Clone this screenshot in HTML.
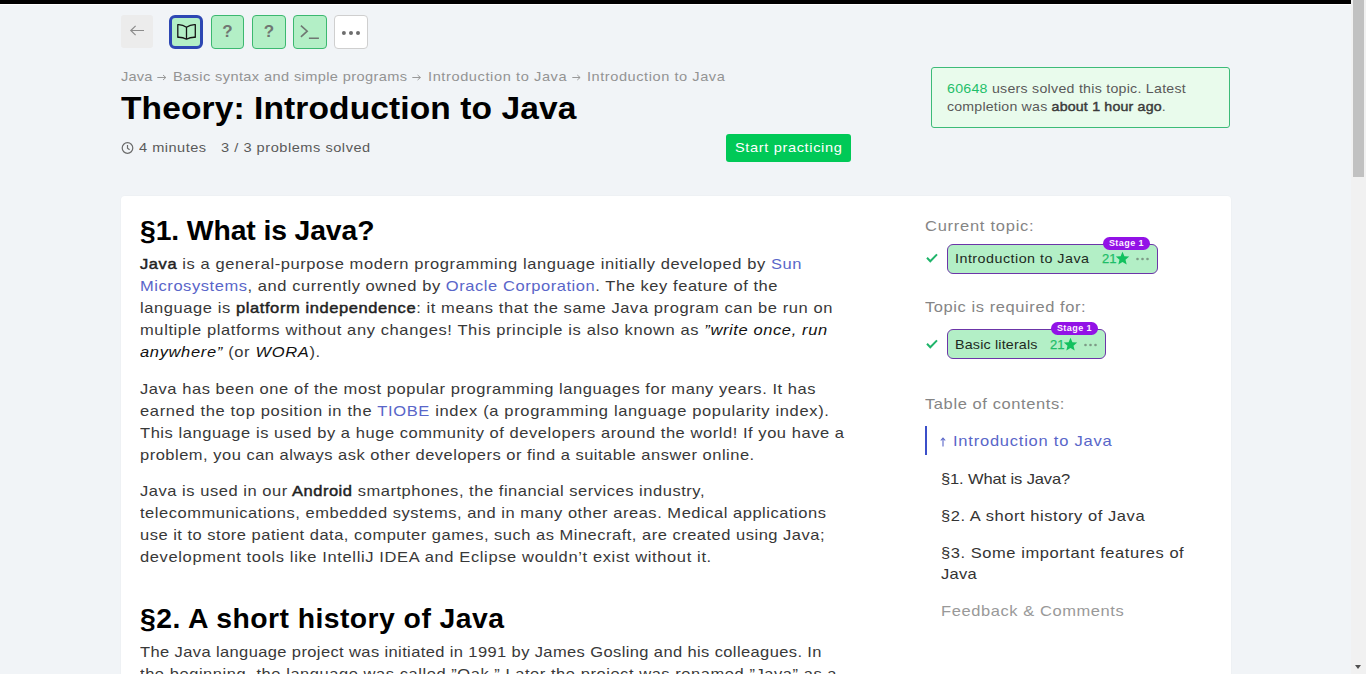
<!DOCTYPE html>
<html><head><meta charset="utf-8"><title>Theory: Introduction to Java</title>
<style>
html,body{margin:0;padding:0;}
body{width:1366px;height:674px;overflow:hidden;background:#f1f4f7;position:relative;font-family:"Liberation Sans",sans-serif;}
.ln{position:absolute;white-space:nowrap;transform-origin:0 0;}
.bt{color:#383838;}
.bt b{color:#222;font-weight:normal;-webkit-text-stroke:0.45px #222;}
.bt i{color:#111;}
.lk{color:#5966c9;}
.crumb{color:#939393;}
.title{color:#000;font-weight:bold;}
.meta{color:#5a5a5a;}
.info{color:#595959;}
.gn{color:#1fbf6a;}
.dk{color:#3a3a3a;font-weight:normal;-webkit-text-stroke:0.45px #3a3a3a;}
.startt{color:#fff;}
.h2{color:#000;font-weight:bold;}
.side{color:#858585;}
.tocl{color:#5966c9;}
.toci{color:#333;}
.tocf{color:#999;}
.pill{color:#1d2a22;}
.abs{position:absolute;box-sizing:border-box;}
.btn{background:#b3efc6;border:1px solid #3cb870;border-radius:4px;}
.q{position:absolute;left:0;top:0;width:100%;text-align:center;font-weight:bold;font-size:17px;line-height:32px;color:#6f7772;}
.pillb{background:#b3efc6;border:1.5px solid #6c35a8;border-radius:6px;}
.badge{background:#9212e6;color:#fdf0ff;border-radius:7px;font-size:9px;font-weight:bold;line-height:13.5px;text-align:center;letter-spacing:0.45px;}
.stars{color:#1fbd68;font-size:13px;line-height:18px;-webkit-text-stroke:0.25px #1fbd68;}

</style></head><body>
<div class="abs" style="left:0;top:0;width:1351px;height:4px;background:#000"></div>
<div class="abs" style="left:0;top:4px;width:1351px;height:1px;background:#fff"></div>
<div class="abs" style="left:1351px;top:0;width:15px;height:674px;background:#f1f1f1"></div>
<div class="abs" style="left:1353px;top:0;width:11px;height:177px;background:#c1c1c1"></div>
<div class="abs" style="left:1355px;top:665px;width:0;height:0;border-left:3.5px solid transparent;border-right:3.5px solid transparent;border-top:4px solid #505050"></div>
<!-- nav buttons -->
<div class="abs" style="left:121px;top:15px;width:32px;height:33px;background:#ececec;border-radius:3px">
  <svg width="32" height="33" style="position:absolute;left:0;top:0"><path d="M9.8 15.5 H23 M14.6 10.9 L9.8 15.5 L14.6 20.1" fill="none" stroke="#8c8c8c" stroke-width="1.2"/></svg>
</div>
<div class="abs" style="left:169px;top:15px;width:34px;height:34px;background:#b3efc6;border:3px solid #2d47b3;border-radius:6px">
  <svg width="28" height="28" style="position:absolute;left:0;top:0"><path d="M5.8 6.6 Q10.5 6.3 14.5 9.2 Q18.5 6.3 23.3 6.6 V19.3 Q18.5 19 14.5 21.2 Q10.5 19 5.8 19.3 Z M14.5 9.2 V21.2" fill="none" stroke="#151515" stroke-width="1.3" stroke-linejoin="round"/></svg>
</div>
<div class="abs btn" style="left:211px;top:15px;width:33px;height:34px"><span class="q">?</span></div>
<div class="abs btn" style="left:252px;top:15px;width:34px;height:34px"><span class="q">?</span></div>
<div class="abs btn" style="left:293px;top:15px;width:34px;height:34px">
  <svg width="32" height="32" style="position:absolute;left:0;top:0"><path d="M6.9 9.6 L13.2 15.2 L6.9 20.8 M14.9 22.2 H24.9" fill="none" stroke="#6f7772" stroke-width="1.6"/></svg>
</div>
<div class="abs" style="left:334px;top:15px;width:34px;height:34px;background:#fff;border:1px solid #cfcfcf;border-radius:4px">
  <svg width="32" height="32" style="position:absolute;left:0;top:0"><circle cx="8.9" cy="17" r="2" fill="#6d6d6d"/><circle cx="16" cy="17" r="2" fill="#6d6d6d"/><circle cx="23" cy="17" r="2" fill="#6d6d6d"/></svg>
</div>
<!-- crumb arrows -->
<svg class="abs" style="left:156.7px;top:71.6px" width="10.4" height="10"><path d="M0.3 5.5 H8.8 M6.0 3 L8.8 5.5 L6.0 8" fill="none" stroke="#999" stroke-width="1"/></svg>
<svg class="abs" style="left:411.5px;top:71.6px" width="10.0" height="10"><path d="M0.3 5.5 H8.4 M5.6 3 L8.4 5.5 L5.6 8" fill="none" stroke="#999" stroke-width="1"/></svg>
<svg class="abs" style="left:571.7px;top:71.6px" width="9.7" height="10"><path d="M0.3 5.5 H8.1 M5.3 3 L8.1 5.5 L5.3 8" fill="none" stroke="#999" stroke-width="1"/></svg>
<!-- clock -->
<svg class="abs" style="left:121px;top:140.5px" width="14" height="14"><circle cx="6.5" cy="7" r="5.3" fill="none" stroke="#6a6a6a" stroke-width="1.2"/><path d="M6.5 4 V7.2 L8.6 8.8" fill="none" stroke="#6a6a6a" stroke-width="1.2"/></svg>
<!-- info box -->
<div class="abs" style="left:931px;top:67px;width:299px;height:61px;background:#e9fbec;border:1px solid #3dbb78;border-radius:3px"></div>
<!-- start button -->
<div class="abs" style="left:726px;top:134px;width:125px;height:28px;background:#00c957;border-radius:3px"></div>
<!-- card -->
<div class="abs" style="left:121px;top:196px;width:1110px;height:500px;background:#fff;border-radius:4px;box-shadow:0 0 0 1px rgba(0,20,40,0.012)"></div>
<!-- sidebar pills -->
<svg class="abs" style="left:925px;top:251px" width="14" height="14"><path d="M2 6.8 L5.3 10.2 L12 3.4" fill="none" stroke="#1fb46a" stroke-width="2"/></svg>
<div class="abs pillb" style="left:947px;top:244px;width:211px;height:30px"></div>
<div class="abs badge" style="left:1103px;top:237px;width:47px;height:13px">Stage 1</div>
<span class="abs stars" style="left:1102px;top:250px">21</span>
<svg class="abs" style="left:1114.5px;top:250.5px" width="15" height="15"><path d="M7.5 0.8 L9.4 5.2 L14.2 5.6 L10.5 8.7 L11.7 13.4 L7.5 10.9 L3.3 13.4 L4.5 8.7 L0.8 5.6 L5.6 5.2 Z" fill="#12c15e"/></svg>
<svg class="abs" style="left:1135px;top:256px" width="16" height="6"><circle cx="2.5" cy="3" r="1.3" fill="#7d9a86"/><circle cx="7.5" cy="3" r="1.3" fill="#7d9a86"/><circle cx="12.5" cy="3" r="1.3" fill="#7d9a86"/></svg>

<svg class="abs" style="left:925px;top:337px" width="14" height="14"><path d="M2 6.8 L5.3 10.2 L12 3.4" fill="none" stroke="#1fb46a" stroke-width="2"/></svg>
<div class="abs pillb" style="left:947px;top:329px;width:159px;height:30px"></div>
<div class="abs badge" style="left:1051px;top:322px;width:47px;height:13px">Stage 1</div>
<span class="abs stars" style="left:1050px;top:336px">21</span>
<svg class="abs" style="left:1062.5px;top:336.5px" width="15" height="15"><path d="M7.5 0.8 L9.4 5.2 L14.2 5.6 L10.5 8.7 L11.7 13.4 L7.5 10.9 L3.3 13.4 L4.5 8.7 L0.8 5.6 L5.6 5.2 Z" fill="#12c15e"/></svg>
<svg class="abs" style="left:1083px;top:342px" width="16" height="6"><circle cx="2.5" cy="3" r="1.3" fill="#7d9a86"/><circle cx="7.5" cy="3" r="1.3" fill="#7d9a86"/><circle cx="12.5" cy="3" r="1.3" fill="#7d9a86"/></svg>
<!-- toc -->
<div class="abs" style="left:925px;top:426px;width:2px;height:29px;background:#3b4fc9"></div>
<svg class="abs" style="left:939px;top:436px" width="8" height="12"><path d="M4 2 V10.5 M1.8 4.5 L4 2 L6.2 4.5" fill="none" stroke="#5966c9" stroke-width="1.1"/></svg>

<div class="ln bt" id="b0" style="left:139.50px;top:252.50px;font-size:15px;line-height:22px;letter-spacing:0.5297px;transform:scaleX(1.1)"><span class="m"><b>Java</b> is a general-purpose modern programming language initially developed by <span class="lk">Sun</span></span></div>
<div class="ln bt" id="b1" style="left:139.50px;top:274.50px;font-size:15px;line-height:22px;letter-spacing:0.5069px;transform:scaleX(1.1)"><span class="m"><span class="lk">Microsystems</span>, and currently owned by <span class="lk">Oracle Corporation</span>. The key feature of the</span></div>
<div class="ln bt" id="b2" style="left:139.50px;top:296.50px;font-size:15px;line-height:22px;letter-spacing:0.5320px;transform:scaleX(1.1)"><span class="m">language is <b>platform independence</b>: it means that the same Java program can be run on</span></div>
<div class="ln bt" id="b3" style="left:139.50px;top:318.50px;font-size:15px;line-height:22px;letter-spacing:0.5513px;transform:scaleX(1.1)"><span class="m">multiple platforms without any changes! This principle is also known as <i>&#8221;write once, run</i></span></div>
<div class="ln bt" id="b4" style="left:139.50px;top:340.50px;font-size:15px;line-height:22px;letter-spacing:0.5921px;transform:scaleX(1.1)"><span class="m"><i>anywhere&#8221;</i> (or <i>WORA</i>).</span></div>
<div class="ln bt" id="b5" style="left:139.50px;top:377.50px;font-size:15px;line-height:22px;letter-spacing:0.4991px;transform:scaleX(1.1)"><span class="m">Java has been one of the most popular programming languages for many years. It has</span></div>
<div class="ln bt" id="b6" style="left:139.50px;top:399.50px;font-size:15px;line-height:22px;letter-spacing:0.5893px;transform:scaleX(1.1)"><span class="m">earned the top position in the <span class="lk">TIOBE</span> index (a programming language popularity index).</span></div>
<div class="ln bt" id="b7" style="left:139.50px;top:421.50px;font-size:15px;line-height:22px;letter-spacing:0.4997px;transform:scaleX(1.1)"><span class="m">This language is used by a huge community of developers around the world! If you have a</span></div>
<div class="ln bt" id="b8" style="left:139.50px;top:443.50px;font-size:15px;line-height:22px;letter-spacing:0.4510px;transform:scaleX(1.1)"><span class="m">problem, you can always ask other developers or find a suitable answer online.</span></div>
<div class="ln bt" id="b9" style="left:139.50px;top:480.40px;font-size:15px;line-height:22px;letter-spacing:0.4843px;transform:scaleX(1.1)"><span class="m">Java is used in our <b>Android</b> smartphones, the financial services industry,</span></div>
<div class="ln bt" id="b10" style="left:139.50px;top:502.40px;font-size:15px;line-height:22px;letter-spacing:0.4766px;transform:scaleX(1.1)"><span class="m">telecommunications, embedded systems, and in many other areas. Medical applications</span></div>
<div class="ln bt" id="b11" style="left:139.50px;top:524.40px;font-size:15px;line-height:22px;letter-spacing:0.4536px;transform:scaleX(1.1)"><span class="m">use it to store patient data, computer games, such as Minecraft, are created using Java;</span></div>
<div class="ln bt" id="b12" style="left:139.50px;top:546.40px;font-size:15px;line-height:22px;letter-spacing:0.5724px;transform:scaleX(1.1)"><span class="m">development tools like IntelliJ IDEA and Eclipse wouldn&#8217;t exist without it.</span></div>
<div class="ln bt" id="b13" style="left:139.50px;top:640.60px;font-size:15px;line-height:22px;letter-spacing:0.3489px;transform:scaleX(1.1)"><span class="m">The Java language project was initiated in 1991 by James Gosling and his colleagues. In</span></div>
<div class="ln bt" id="b14" style="left:139.50px;top:662.60px;font-size:15px;line-height:22px;letter-spacing:0.4980px;transform:scaleX(1.1)"><span class="m">the beginning, the language was called &#8221;Oak.&#8221; Later the project was renamed &#8221;Java&#8221; as a</span></div>
<div class="ln crumb" id="cr0" style="left:121.00px;top:68.32px;font-size:13.5px;line-height:18px;letter-spacing:0.1523px;transform:scaleX(1.08)"><span class="m">Java</span></div>
<div class="ln crumb" id="cr1" style="left:173.10px;top:68.32px;font-size:13.5px;line-height:18px;letter-spacing:0.3600px;transform:scaleX(1.08)"><span class="m">Basic syntax and simple programs</span></div>
<div class="ln crumb" id="cr2" style="left:427.90px;top:68.32px;font-size:13.5px;line-height:18px;letter-spacing:0.5527px;transform:scaleX(1.08)"><span class="m">Introduction to Java</span></div>
<div class="ln crumb" id="cr3" style="left:587.20px;top:68.32px;font-size:13.5px;line-height:18px;letter-spacing:0.5137px;transform:scaleX(1.08)"><span class="m">Introduction to Java</span></div>
<div class="ln title" id="title" style="left:121.00px;top:89.43px;font-size:30.5px;line-height:38px;letter-spacing:0.0820px;transform:scaleX(1.1)"><span class="m">Theory: Introduction to Java</span></div>
<div class="ln meta" id="min" style="left:138.70px;top:139.02px;font-size:13.5px;line-height:18px;letter-spacing:0.4482px;transform:scaleX(1.08)"><span class="m">4 minutes</span></div>
<div class="ln meta" id="solved" style="left:221.10px;top:139.02px;font-size:13.5px;line-height:18px;letter-spacing:0.4915px;transform:scaleX(1.08)"><span class="m">3 / 3 problems solved</span></div>
<div class="ln info" id="info1" style="left:946.70px;top:80.12px;font-size:13.5px;line-height:18px;letter-spacing:0.2510px;transform:scaleX(1.05)"><span class="m"><span class="gn">60648</span> users solved this topic. Latest</span></div>
<div class="ln info" id="info2" style="left:946.70px;top:98.12px;font-size:13.5px;line-height:18px;letter-spacing:0.1847px;transform:scaleX(1.05)"><span class="m">completion was <span class="dk">about 1 hour ago</span>.</span></div>
<div class="ln startt" id="start" style="left:734.70px;top:138.52px;font-size:13.5px;line-height:18px;letter-spacing:0.5893px;transform:scaleX(1.08)"><span class="m">Start practicing</span></div>
<div class="ln h2" id="h1" style="left:139.50px;top:213.94px;font-size:27px;line-height:34px;letter-spacing:-0.1107px;transform:scaleX(1.05)"><span class="m">&#167;1. What is Java?</span></div>
<div class="ln h2" id="h2" style="left:139.50px;top:602.34px;font-size:27px;line-height:34px;letter-spacing:0.4255px;transform:scaleX(1.05)"><span class="m">&#167;2. A short history of Java</span></div>
<div class="ln side" id="cur" style="left:925.40px;top:215.30px;font-size:15px;line-height:22px;letter-spacing:0.6684px;transform:scaleX(1.1)"><span class="m">Current topic:</span></div>
<div class="ln side" id="req" style="left:925.40px;top:296.00px;font-size:15px;line-height:22px;letter-spacing:0.5209px;transform:scaleX(1.1)"><span class="m">Topic is required for:</span></div>
<div class="ln side" id="toc" style="left:925.40px;top:393.10px;font-size:15px;line-height:22px;letter-spacing:0.5379px;transform:scaleX(1.1)"><span class="m">Table of contents:</span></div>
<div class="ln tocl" id="t0" style="left:952.80px;top:429.70px;font-size:15px;line-height:22px;letter-spacing:0.7023px;transform:scaleX(1.1)"><span class="m">Introduction to Java</span></div>
<div class="ln toci" id="t1" style="left:940.60px;top:467.60px;font-size:15px;line-height:22px;letter-spacing:-0.1115px;transform:scaleX(1.1)"><span class="m">&#167;1. What is Java?</span></div>
<div class="ln toci" id="t2" style="left:940.60px;top:504.50px;font-size:15px;line-height:22px;letter-spacing:0.5124px;transform:scaleX(1.1)"><span class="m">&#167;2. A short history of Java</span></div>
<div class="ln toci" id="t3" style="left:940.60px;top:541.60px;font-size:15px;line-height:22px;letter-spacing:0.5065px;transform:scaleX(1.1)"><span class="m">&#167;3. Some important features of</span></div>
<div class="ln toci" id="t3b" style="left:940.60px;top:563.10px;font-size:15px;line-height:22px;letter-spacing:0.2827px;transform:scaleX(1.1)"><span class="m">Java</span></div>
<div class="ln tocf" id="fb" style="left:940.60px;top:599.70px;font-size:15px;line-height:22px;letter-spacing:0.5192px;transform:scaleX(1.1)"><span class="m">Feedback &amp; Comments</span></div>
<div class="ln pill" id="p1" style="left:955.20px;top:250.10px;font-size:13px;line-height:18px;letter-spacing:0.4400px;transform:scaleX(1.1)"><span class="m">Introduction to Java</span></div>
<div class="ln pill" id="p2" style="left:955.20px;top:335.90px;font-size:13px;line-height:18px;letter-spacing:0.1562px;transform:scaleX(1.1)"><span class="m">Basic literals</span></div>
</body></html>
